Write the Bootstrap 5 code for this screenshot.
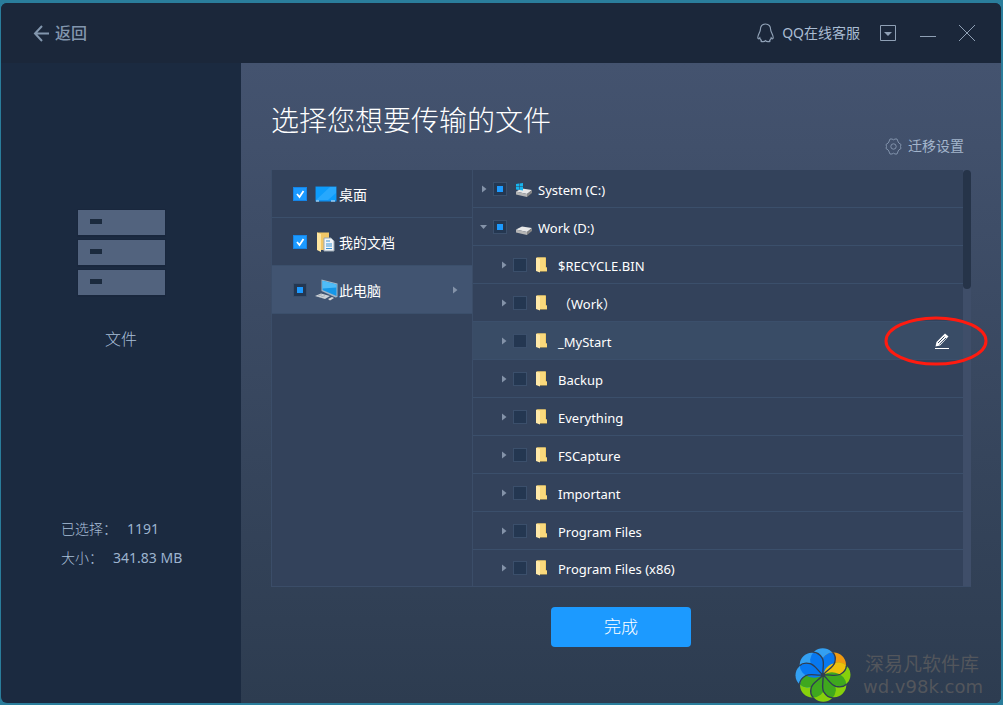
<!DOCTYPE html>
<html lang="zh-CN">
<head>
<meta charset="utf-8">
<meta name="viewport" content="width=device-width, initial-scale=1">
<title>选择您想要传输的文件</title>
<link href="https://cdn.jsdelivr.net/npm/bootstrap@5.3.0/dist/css/bootstrap.min.css" rel="stylesheet">
<style>
  body { background: #2a7d9b; color: #fff; font: 14px/20px "Noto Sans", "Noto Sans CJK SC", sans-serif; }
  .app-window { min-height: calc(100vh - 5px); margin: 3px 2px 2px 1px; border-radius: 6px; background: #1b2a40; }
  .title-bar { min-height: 60px; background: #1b273a; color: #a9bcd2; padding: 0 25px 0 32px; }
  .title-bar button, .settings-btn, .edit-btn { background: none; border: 0; padding: 0; color: inherit; }
  .back-btn { font-size: 16px; font-weight: 500; color: #8296ad !important; gap: 5px; }
  .win-btns { gap: 18px; }
  .side-pane { width: 240px; color: #a9bfd8; }
  .side-icon { margin-top: 144px; }
  .side-name { font-size: 16px; font-weight: 300; line-height: 24px; margin-top: 29px; }
  .side-stats { margin: 163px 0 0 60px; font-weight: 300; line-height: 29px; }
  .side-stats div { gap: 10px; }
  .side-stats dt { font-weight: 300; }
  .side-stats dd { margin: 0; font-weight: 400; color: #9db4cf; }
  .main-pane { background: linear-gradient(#44536f, #2d3c50); padding: 0 30px; }
  .page-title { font-size: 28px; font-weight: 300; line-height: 40px; margin: 37px 0 0; }
  .settings-btn { color: #a3b5cc; gap: 6px; margin: -4px 7px 0 0; }
  .file-panel { background: #33425b; border: solid #3b4d68; border-width: 0 0 1px 1px; margin-top: 14px; }
  .place-list { width: 201px; border-right: 1px solid #3b4d68; }
  .place-row { height: 48px; border-bottom: 1px solid #3b4f6b; padding-left: 21px; padding-right: 12px; }
  .place-row label { padding-top: 2px; }
  .place-row.current { background: #415471; }
  .tree-row { height: 38px; border-bottom: 1px solid #3b4f6b; padding-left: 6px; font-size: 13px; }
  .tree-row:last-child { height: 36px; border-bottom: 0; }
  .tree-row.level-2 { padding-left: 26px; }
  .tree-row.hovered { background: #394c66; }
  .tree-row label { margin-left: 5px; padding-top: 2px; }
  .tree-row.level-2 label { margin-left: 9px; }
  .form-check-input.tick { width: 14px; height: 14px; margin: 0; border-radius: 0; border: 1px solid #3b4f6b; background-color: #243751; flex: none; }
  .form-check-input.tick:checked { background: url("data:image/svg+xml,%3Csvg xmlns='http://www.w3.org/2000/svg' viewBox='0 0 12 12'%3E%3Cpath d='M3 6l2.500 3L9.500 3' fill='none' stroke='%23fff' stroke-width='1.800'/%3E%3C/svg%3E") center / 12px 12px no-repeat #1c9aff; border-color: #1585e8; }
  .form-check-input.tick:indeterminate { background: linear-gradient(#1c9aff, #1c9aff) center / 6px 6px no-repeat #243751; border-color: #3b4f6b; }
  .twisty { width: 10px; flex: none; }
  .scroll-track { width: 8px; background: #3f4e69; }
  .scroll-thumb { height: 119px; background: #263449; border-radius: 4px; }
  .edit-btn { margin-right: 13px; }
  .ring-mark { left: 50%; top: 50%; transform: translate(-50%, -50%); margin-left: -6px; pointer-events: none; }
  .done-btn { width: 140px; height: 40px; margin-top: 20px; border: 0; border-radius: 4px; background: #1c9aff; color: #fff; font-size: 17px; font-weight: 300; }
  .site-mark { right: 18px; bottom: 0; color: #53565c; gap: 9px; }
  .site-name { font-size: 19px; line-height: 24px; padding-left: 2px; }
  .site-url { font: 18px/22px "DejaVu Sans", sans-serif; }
</style>
</head>
<body>
<svg class="d-none">
  <symbol id="tri" viewBox="0 0 10 10"><path d="M3 1.500v7L7.500 5z" fill="#8493a9"/></symbol>
  <symbol id="tri-down" viewBox="0 0 10 10"><path d="M1 3h7L4.500 7z" fill="#8493a9"/></symbol>
  <symbol id="folder" viewBox="0 0 12 16"><path d="M1 .5h9v10h1v4H3z" fill="#e9bf55"/><path d="M1 .5h8.500v10h1.500v3.500H4z" fill="#fad97c"/><path d="M0 .5l4 1.500V15.500L0 14z" fill="#ffe9a8"/></symbol>
  <symbol id="drive" viewBox="0 0 18 14"><path d="M1 7.500l6-3 10 1.500-5 4z" fill="#e8e8e8"/><path d="M1 7.500l11 2.500v3L1 10.500z" fill="#b5b5b5"/><path d="M12 10L17 6v3l-5 4z" fill="#858585"/></symbol>
</svg>
<div class="app-window d-flex flex-column overflow-hidden position-relative">
  <header class="title-bar d-flex align-items-center justify-content-between">
    <button class="back-btn d-flex align-items-center" type="button">
      <svg width="17" height="17" viewBox="0 0 17 17" fill="none" stroke="currentColor" stroke-width="2"><path d="M9 1L2 8.500 9 16M2 8.500h14"/></svg>
      <span>返回</span>
    </button>
    <div class="win-btns d-flex align-items-center">
      <button class="d-flex align-items-center gap-2" type="button">
        <svg width="17" height="20" viewBox="0 0 17 20" fill="none" stroke="#8fa0b5" stroke-width="1.200"><path d="M8.500 1C5 1 3.300 3.600 3.300 7c0 2-2.500 4.500-2.500 7.500 0 1.500.8 1.800 2 .3.300 1.200.8 1.900 1.500 2.500-1.500 1.500 3 1.900 4.200.4 1.200 1.500 5.700 1.100 4.200-.4.700-.6 1.200-1.300 1.500-2.500 1.200 1.500 2 1.200 2-.3 0-3-2.500-5.500-2.500-7.500 0-3.400-1.700-6-5.200-6z"/></svg>
        <span>QQ在线客服</span>
      </button>
      <button type="button" class="d-flex" aria-label="菜单"><svg width="20" height="16" viewBox="0 0 20 16"><path d="M2.500.5h15v15h-15z" fill="none" stroke="#8fa0b5"/><path d="M6 7h8l-4 4z" fill="#8fa0b5"/></svg></button>
      <button type="button" class="d-flex" aria-label="最小化"><svg width="24" height="16" viewBox="0 0 24 16"><path d="M4 11.500h16" stroke="#8fa0b5"/></svg></button>
      <button type="button" class="d-flex" aria-label="关闭"><svg width="18" height="18" viewBox="0 0 18 18"><path d="M1 1l16 16M17 1L1 17" stroke="#8fa0b5"/></svg></button>
    </div>
  </header>
  <div class="d-flex flex-fill">
    <aside class="side-pane flex-shrink-0">
      <div class="d-flex flex-column align-items-center">
        <svg class="side-icon" width="91" height="91" viewBox="0 0 91 91"><g fill="#17243a"><path d="M1 2h89v28H1zM1 32h89v28H1zM1 62h89v28H1z" opacity=".5"/></g><path d="M2 3h87v25H2zM2 33h87v25H2zM2 63h87v25H2z" fill="#52637e"/><path d="M14 12h12v5H14zM14 42h12v5H14zM14 72h12v5H14z" fill="#1b2a3d"/></svg>
        <div class="side-name">文件</div>
      </div>
      <dl class="side-stats">
        <div class="d-flex"><dt>已选择：</dt><dd>1191</dd></div>
        <div class="d-flex"><dt>大小：</dt><dd>341.83 MB</dd></div>
      </dl>
    </aside>
    <main class="main-pane flex-fill d-flex flex-column">
      <h1 class="page-title">选择您想要传输的文件</h1>
      <button class="settings-btn d-flex align-items-center align-self-end" type="button">
        <svg width="17" height="17" viewBox="0 0 17 17" fill="none" stroke="#8192ab"><path d="M5 1h2l1.500.8L10 1h2l1.200 3 .8 1.200 2 1.300q-1 2 0 4L14 11.800 13.200 13 12 16h-2l-1.500-.8L7 16H5l-1.200-3L3 11.800 1 10.500q1-2 0-4L3 5.200 3.800 4z"/><circle cx="8.500" cy="8.500" r="2.700"/></svg>
        <span>迁移设置</span>
      </button>
      <section class="file-panel d-flex">
        <div class="place-list flex-shrink-0">
          <div class="place-row d-flex align-items-center">
            <input class="form-check-input tick" type="checkbox" id="p1" checked>
            <svg class="ms-2" width="24" height="18" viewBox="0 0 24 18"><path d="M.5 1.500h21v15H.5z" fill="#1190ee"/><path d="M1 2h20v13H1z" fill="#0d9cfb"/><path d="M1 15L15 2h6v6l-8 7z" fill="#39b0ff" opacity=".6"/><path d="M1 16h3M16 16h4" stroke="#d8efff"/></svg>
            <label for="p1">桌面</label>
          </div>
          <div class="place-row d-flex align-items-center">
            <input class="form-check-input tick" type="checkbox" id="p2" checked>
            <svg class="ms-2" width="24" height="20" viewBox="0 0 24 20"><path d="M2 .5h12V18H2z" fill="#f2c766"/><path d="M2 .5L6 2v18l-4-2z" fill="#ffe6a0"/><path d="M9 6h7l3 3v10H9z" fill="#f3f6f9" stroke="#9aa7b3"/><path d="M11 9h4M11 12h6M11 14h6M11 16.500h6" stroke="#3b94d6"/></svg>
            <label for="p2">我的文档</label>
          </div>
          <div class="place-row current d-flex align-items-center">
            <input class="form-check-input tick part" type="checkbox" id="p3">
            <svg class="ms-2" width="24" height="22" viewBox="0 0 24 22"><path d="M6.500.5l16 4v13.500l-2 .5L6.500 12z" fill="#9fb4c6"/><path d="M7.500 1.800l14 3.700v11.500L7.500 11z" fill="#1597e8"/><path d="M7.500 1.800l14 3.700v3L7.500 9.500z" fill="#4fbcf8"/><path d="M0 17l6-2.500 9 2.500-5 3z" fill="#cdd3d8"/><path d="M3 17l4-1.300M6 18l4-1.300" stroke="#a9b0b8"/><path d="M13 20l4-2 2 1-4 2.500z" fill="#d8d8d8"/></svg>
            <label for="p3" class="me-auto">此电脑</label>
            <svg width="10" height="10"><use href="#tri"/></svg>
          </div>
        </div>
        <div class="flex-fill" id="tree">
          <div class="tree-row d-flex align-items-center">
            <svg class="twisty" height="10"><use href="#tri"/></svg>
            <input class="form-check-input tick part ms-1" type="checkbox" id="t0">
            <svg class="ms-2" width="18" height="18" viewBox="0 0 18 18"><use href="#drive" y="4" width="18" height="14"/><path d="M1 4l3-.5v3H1zM4.500 3.400L8 3v3.500H4.500zM1 7h3v3l-3-.5zM4.500 7H8v3.500L4.500 10z" fill="#18b4ee"/></svg>
            <label for="t0">System (C:)</label>
          </div>
          <div class="tree-row d-flex align-items-center">
            <svg class="twisty" height="10"><use href="#tri-down"/></svg>
            <input class="form-check-input tick part ms-1" type="checkbox" id="t1">
            <svg class="ms-2" width="18" height="18" viewBox="0 0 18 18"><use href="#drive" y="4" width="18" height="14"/></svg>
            <label for="t1">Work (D:)</label>
          </div>
        </div>
        <div class="scroll-track"><div class="scroll-thumb"></div></div>
      </section>
      <button class="done-btn align-self-center" type="button">完成</button>
    </main>
  </div>
  <div class="site-mark position-absolute d-flex align-items-center">
    <svg width="62" height="56" viewBox="-29 -27 58 54" preserveAspectRatio="none" id="flower"></svg>
    <div><div class="site-name">深易凡软件库</div><div class="site-url">wd.v98k.com</div></div>
  </div>
</div>
<script src="https://cdn.jsdelivr.net/npm/bootstrap@5.3.0/dist/js/bootstrap.bundle.min.js"></script>
<script>
  const names = ['$RECYCLE.BIN', '（Work）', '_MyStart', 'Backup', 'Everything', 'FSCapture', 'Important', 'Program Files', 'Program Files (x86)'];
  document.getElementById('tree').insertAdjacentHTML('beforeend', names.map((name, i) => `
    <div class="tree-row level-2 d-flex align-items-center${i === 2 ? ' hovered' : ''}">
      <svg class="twisty" height="10"><use href="#tri"/></svg>
      <input class="form-check-input tick ms-1" type="checkbox" id="f${i}">
      <svg class="ms-2" width="14" height="16" viewBox="-1 0 14 16"><use href="#folder" width="12" height="16"/></svg>
      <label for="f${i}" class="me-auto">${name}</label>
      ${i === 2 ? `<button class="edit-btn position-relative d-flex" type="button" aria-label="编辑">
        <svg width="16" height="18" viewBox="0 0 16 18"><path d="M1 16.500h14" stroke="#fff"/><path d="M1.500 14.500l1-4.500L11 1.500l3.500 3L6 13.500z" fill="#fff"/><path d="M4 11l6.500-6.500M5.500 12.300L12 6" stroke="#394c66"/></svg>
        <svg class="ring-mark position-absolute" width="104" height="50" viewBox="0 0 104 50"><ellipse cx="52" cy="25" rx="50" ry="23" fill="none" stroke="#ff1b10" stroke-width="3"/></svg>
      </button>` : ''}
    </div>`).join(''));
  document.querySelectorAll('.part').forEach(box => box.indeterminate = true);

  // Eight petals; each one shows its overlap with the next petal clockwise in a deeper tone.
  const blue = ['#33a0f2', '#0878f0'], green = ['#86d00c', '#3fa81e'], orange = ['#f09a10', '#eec00c'];
  const petals = [blue, orange, green, green, green, green, blue, blue];
  const drop = 'M0 0C-9-2-12-9-12-15A11.800 11.800 0 0 1 11.500-15C11.500-9 8-3 0 0z';
  document.getElementById('flower').innerHTML =
    `<clipPath id="petal"><path d="${drop}"/></clipPath>` +
    petals.map(([outer], i) => `<path d="${drop}" transform="rotate(${i * 45})" fill="${outer}"/>`).join('') +
    petals.map(([outer, inner], i) => `<g transform="rotate(${i * 45})"><g clip-path="url(#petal)"><path d="${drop}" transform="rotate(45)" fill="${inner}"/></g></g>`).join('') +
    petals.map((p, i) => `<path d="M9-22C11-20 12-16 11-12C9.500-7 4-5 0 0" transform="rotate(${i * 45})" fill="none" stroke="#2f3e53" stroke-width="1.300"/>`).join('') +
    '<circle r="2" fill="#2f3e53"/>';
</script>
</body>
</html>
